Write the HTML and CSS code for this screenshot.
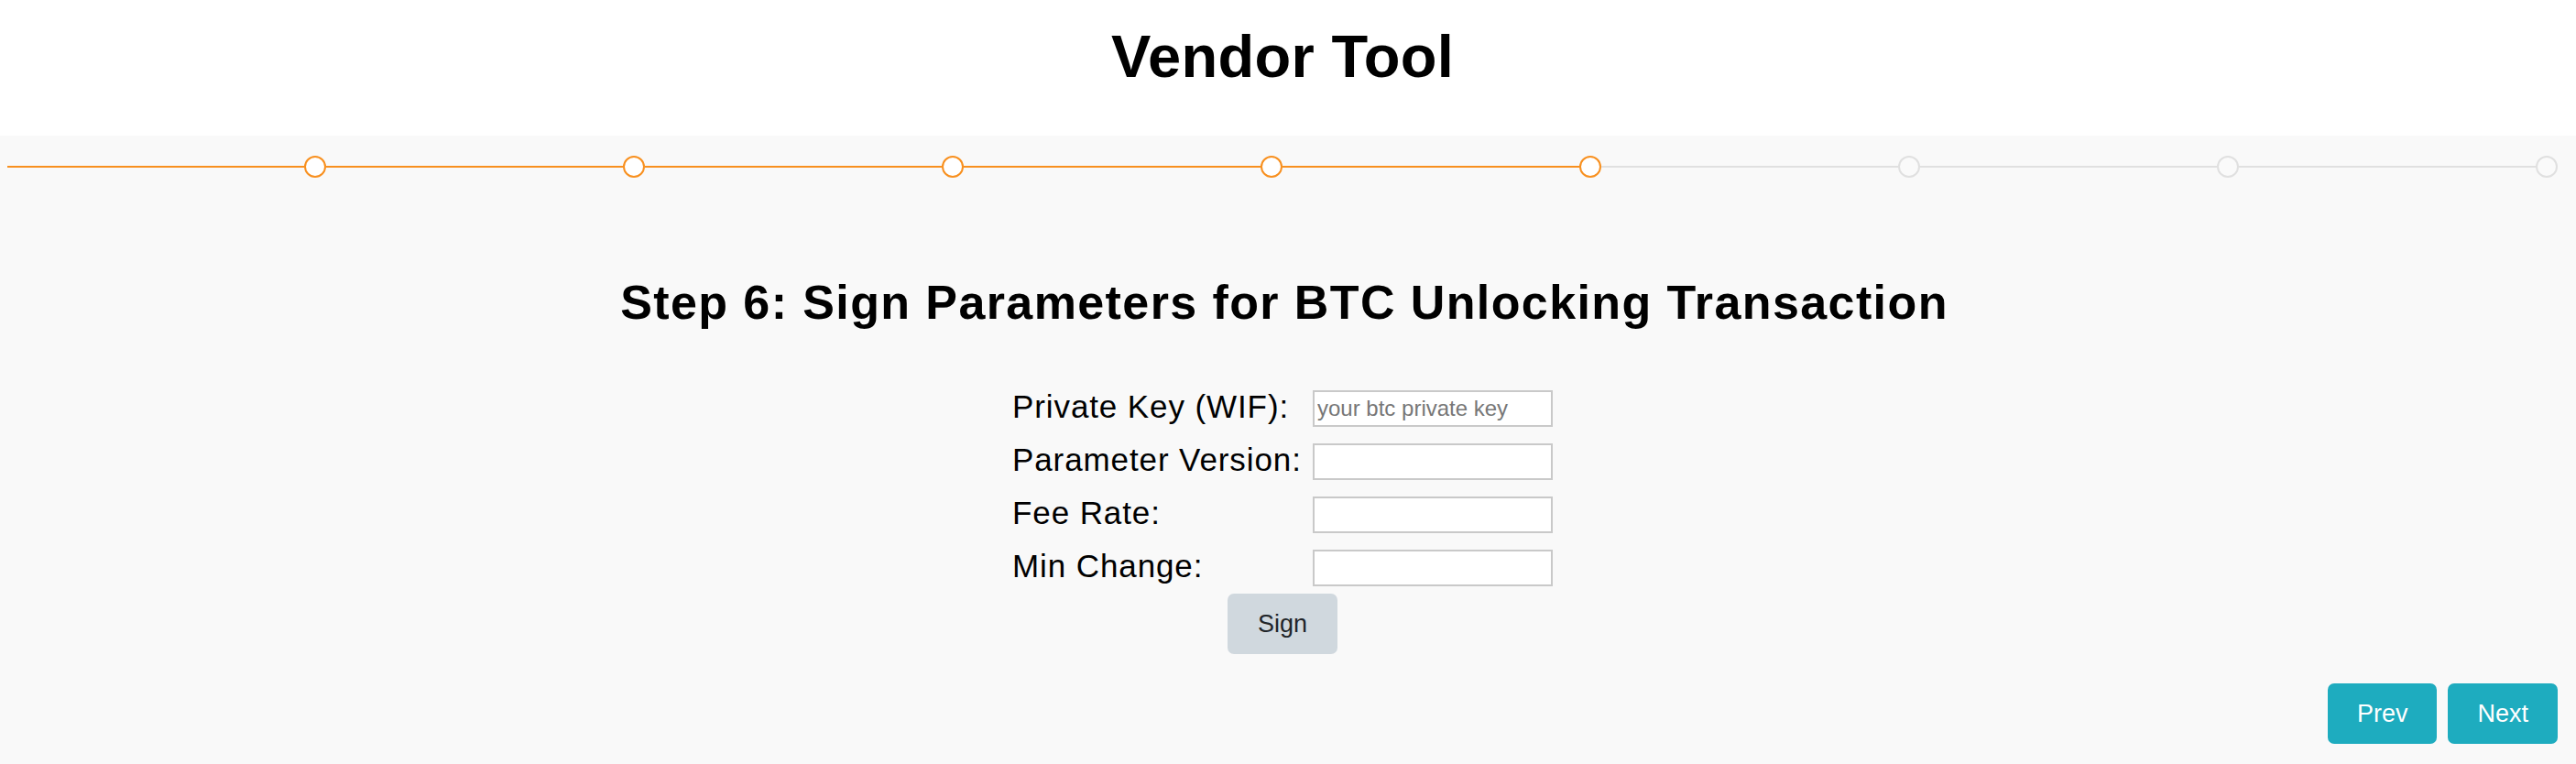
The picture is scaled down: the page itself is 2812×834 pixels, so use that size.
FILE: index.html
```html
<!DOCTYPE html>
<html lang="en">
<head>
<meta charset="utf-8">
<title>Vendor Tool</title>
<link rel="stylesheet" href="styles.css">
</head>
<body>
<header class="header">
  <h1 class="title">Vendor Tool</h1>
</header>
<main class="band">
  <div class="stepper">
    <div class="seg done"><span class="line"></span><span class="dot"></span></div>
    <div class="seg done"><span class="line"></span><span class="dot"></span></div>
    <div class="seg done"><span class="line"></span><span class="dot"></span></div>
    <div class="seg done"><span class="line"></span><span class="dot"></span></div>
    <div class="seg done"><span class="line"></span><span class="dot"></span></div>
    <div class="seg"><span class="line"></span><span class="dot"></span></div>
    <div class="seg"><span class="line"></span><span class="dot"></span></div>
    <div class="seg"><span class="line"></span><span class="dot"></span></div>
  </div>
  <h2 class="step-title">Step 6: Sign Parameters for BTC Unlocking Transaction</h2>
  <form class="form">
    <div class="grid">
      <label class="label" for="pk">Private Key (WIF):</label>
      <input class="input" id="pk" type="text" placeholder="your btc private key">
      <label class="label" for="pv">Parameter Version:</label>
      <input class="input" id="pv" type="text">
      <label class="label" for="fr">Fee Rate:</label>
      <input class="input" id="fr" type="text">
      <label class="label" for="mc">Min Change:</label>
      <input class="input" id="mc" type="text">
    </div>
    <button class="btn-sign" type="button">Sign</button>
  </form>
  <div class="nav">
    <button class="btn-nav" type="button">Prev</button>
    <button class="btn-nav" type="button">Next</button>
  </div>
</main>
</body>
</html>
```
FILE: styles.css
```css
* { box-sizing: border-box; }
html, body { margin: 0; padding: 0; }
body {
  font-family: "Liberation Sans", Arial, sans-serif;
  color: #000;
  background: #fff;
  width: 2812px;
  height: 834px;
  overflow: hidden;
}
.header {
  height: 148px;
  padding-top: 25px;
  text-align: center;
}
.title {
  margin: 0;
  font-size: 65px;
  line-height: 74px;
  font-weight: 700;
  letter-spacing: 0.3px;
  padding-right: 12px;
}
.band {
  background: #f9f9f9;
  height: 686px;
  padding: 22px 20px 0 8px;
  display: flex;
  flex-direction: column;
}
.stepper {
  display: flex;
  height: 24px;
}
.seg {
  flex: 1;
  display: flex;
  align-items: center;
}
.line {
  flex: 1;
  height: 2px;
  background: #e0e0e0;
}
.dot {
  width: 24px;
  height: 24px;
  border-radius: 50%;
  border: 2px solid #e0e0e0;
  background: #fafafa;
}
.seg.done .line { background: #f8901f; }
.seg.done .dot { border-color: #f8901f; background: #fff; }
.step-title {
  margin: 108px 0 0;
  text-align: center;
  font-size: 52px;
  line-height: 56px;
  font-weight: 700;
  letter-spacing: 1.4px;
  padding-left: 4px;
}
.form {
  margin-top: 68px;
  align-self: center;
  display: flex;
  flex-direction: column;
  align-items: center;
}
.grid {
  display: grid;
  grid-template-columns: 328px 262px;
  grid-auto-rows: 40px;
  row-gap: 18px;
  align-items: center;
}
.label {
  font-size: 35px;
  letter-spacing: 0.9px;
  line-height: 40px;
  color: #000;
  position: relative;
  top: -2px;
}
.input {
  width: 262px;
  height: 40px;
  border: 2px solid #c9c9c9;
  background: #fff;
  padding: 0 3px;
  font-family: "Liberation Sans", Arial, sans-serif;
  font-size: 24px;
  color: #000;
  border-radius: 0;
  outline: none;
}
.input::placeholder { color: #777; }
.btn-sign {
  margin-top: 8px;
  width: 120px;
  height: 66px;
  border: none;
  border-radius: 7px;
  background: #d0d8de;
  color: #212529;
  font-family: "Liberation Sans", Arial, sans-serif;
  font-size: 27px;
  padding: 0;
}
.nav {
  margin-top: 32px;
  display: flex;
  justify-content: flex-end;
  gap: 12px;
}
.btn-nav {
  height: 66px;
  padding: 0 32px;
  border: none;
  border-radius: 7px;
  background: #1eacbf;
  color: #fff;
  font-family: "Liberation Sans", Arial, sans-serif;
  font-size: 27px;
}
```
